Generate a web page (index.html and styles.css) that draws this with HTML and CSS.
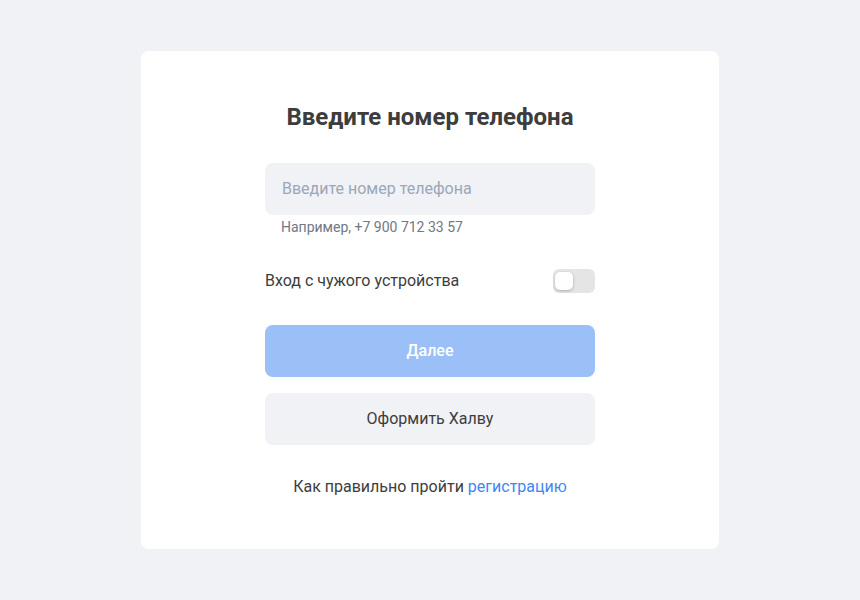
FILE: index.html
```html
<!DOCTYPE html>
<html lang="ru">
<head>
<meta charset="utf-8">
<link rel="stylesheet" href="styles.css">
</head>
<body>
<div class="card">
  <div class="form">
    <h1 class="title">Введите номер телефона</h1>
    <div class="field">Введите номер телефона</div>
    <div class="hint">Например, +7 900 712 33 57</div>
    <div class="row">
      <span class="label">Вход с чужого устройства</span>
      <span class="toggle"><span class="knob"></span></span>
    </div>
    <button class="btn primary">Далее</button>
    <button class="btn secondary">Оформить Халву</button>
    <p class="footer">Как правильно пройти <a class="link" href="#">регистрацию</a></p>
  </div>
</div>
</body>
</html>
```
FILE: styles.css
```css
html, body { margin: 0; padding: 0; }
body {
  background: #f1f2f6;
  font-family: Roboto, "Liberation Sans", Arial, sans-serif;
  color: #3d3d3d;
}
.card {
  width: 578px;
  margin: 51px auto 0;
  background: #ffffff;
  border-radius: 8px;
  padding: 52px 0 52px;
  box-sizing: border-box;
  display: flex;
  justify-content: center;
}
.form {
  width: 330px;
  display: flex;
  flex-direction: column;
}
.title {
  margin: 0;
  font-size: 24px;
  line-height: 28px;
  font-weight: 700;
  text-align: center;
  color: #3d3d3d;
}
.field {
  margin-top: 32px;
  height: 52px;
  box-sizing: border-box;
  background: #f1f2f6;
  border-radius: 8px;
  padding: 0 17px 2px;
  display: flex;
  align-items: center;
  font-size: 16px;
  color: #9ba7b8;
}
.hint {
  margin-top: 4px;
  padding-left: 16px;
  font-size: 14px;
  line-height: 17px;
  color: #707884;
}
.row {
  margin-top: 33px;
  height: 24px;
  display: flex;
  align-items: center;
  justify-content: space-between;
}
.label {
  font-size: 16px;
  line-height: 22px;
  padding-bottom: 1px;
  color: #3d3d3d;
}
.toggle {
  position: relative;
  width: 42px;
  height: 24px;
  background: #e5e5e5;
  border-radius: 6px;
}
.knob {
  position: absolute;
  left: 2px;
  top: 3px;
  width: 18px;
  height: 18px;
  background: #ffffff;
  border-radius: 5px;
  box-shadow: 0 1px 3px rgba(0,0,0,0.25);
}
.btn {
  height: 52px;
  box-sizing: border-box;
  border: none;
  border-radius: 8px;
  font-family: inherit;
  font-size: 16px;
  padding: 0 0 2px;
  cursor: pointer;
}
.primary {
  margin-top: 32px;
  background: #9bc0f8;
  color: #ffffff;
  font-weight: 500;
}
.secondary {
  margin-top: 16px;
  background: #f1f2f6;
  color: #3d3d3d;
}
.footer {
  margin: 32px 0 0;
  font-size: 16px;
  line-height: 20px;
  text-align: center;
  color: #3d3d3d;
}
.link {
  color: #3f85f4;
  text-decoration: none;
}
```
